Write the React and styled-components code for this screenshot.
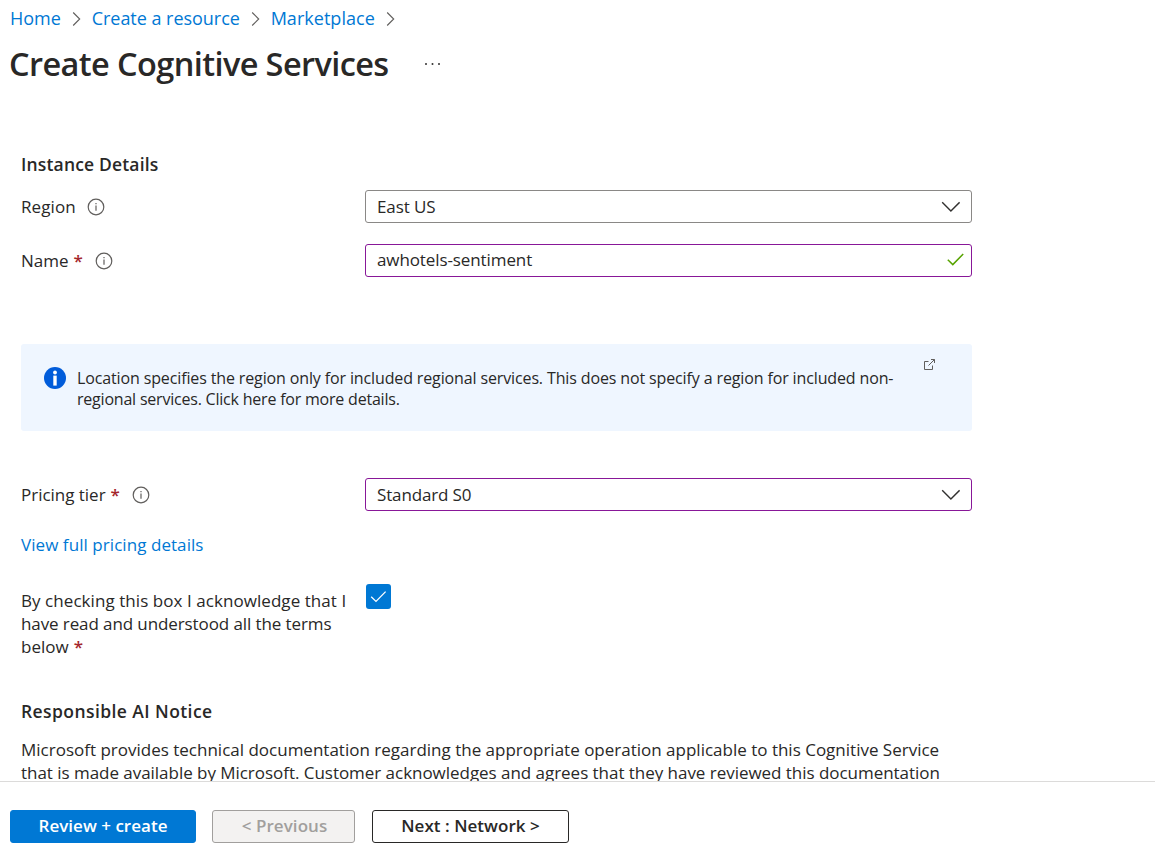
import React from "react";
import styled, { createGlobalStyle } from "styled-components";

const Global = createGlobalStyle`
  * { box-sizing: border-box; }
  body {
    margin: 0;
    background: #fff;
    color: #292827;
    font-family: "Open Sans", "Noto Sans", sans-serif;
    font-size: 17px;
    line-height: 24px;
  }
  p, h1, h2 { margin: 0; }
  svg { display: block; flex: none; }
`;

const Blade = styled.div`
  height: 855px;
  display: flex;
  flex-direction: column;
  overflow: hidden;
`;

const Breadcrumb = styled.nav`
  display: flex;
  align-items: center;
  height: 24px;
  margin-top: 6px;
  padding-left: 10px;
  font-size: 18px;
  white-space: nowrap;
`;

const Crumb = styled.a`
  color: #0078d4;
  text-decoration: none;
  letter-spacing: ${(p) => p.$track || 0}px;
`;

const CrumbArrow = styled.svg`
  margin: 2px 11px 0 10.8px;
`;

const TitleBar = styled.header`
  display: flex;
  align-items: center;
  height: 44px;
  margin-top: 12px;
  padding-left: 9px;
`;

const Title = styled.h1`
  font-size: 32.5px;
  font-weight: 600;
  line-height: 44px;
  letter-spacing: -0.6px;
  white-space: nowrap;
`;

const MoreIcon = styled.svg`
  margin: 0 0 0 35px;
`;

const Form = styled.main`
  flex: 1;
  min-height: 0;
  overflow: hidden;
  padding: 66px 0 0 21px;
`;

const SectionTitle = styled.h2`
  height: 24px;
  margin-top: ${(p) => p.$top || 0}px;
  font-size: 17.5px;
  font-weight: 600;
  line-height: 24px;
  letter-spacing: ${(p) => p.$track || 0}px;
`;

const FieldRow = styled.div`
  display: grid;
  grid-template-columns: 344px 607px;
  align-items: center;
  height: 33px;
  margin-top: ${(p) => p.$top}px;
`;

const Label = styled.label`
  display: flex;
  align-items: center;
  white-space: nowrap;
`;

const Required = styled.span`
  color: #a4262c;
  font-size: 17px;
  font-weight: 600;
  margin-left: 5px;
`;

const InfoIcon = styled.svg`
  margin-left: ${(p) => p.$left}px;
`;

const Control = styled.div`
  display: flex;
  align-items: center;
  justify-content: space-between;
  height: 33px;
  padding: 0 ${(p) => p.$right || 11}px ${(p) => p.$bottom || 0}px 11px;
  border: 1px solid ${(p) => (p.$edited ? "#881798" : "#8a8886")};
  border-radius: 3px;
  letter-spacing: ${(p) => p.$track || 0}px;
`;

const Notice = styled.aside`
  display: flex;
  align-items: flex-start;
  width: 951px;
  height: 87px;
  margin-top: 67px;
  padding: 0 36px 0 23px;
  border-radius: 3px;
  background: #eff6ff;
`;

const NoticeIcon = styled.svg`
  margin-top: 23px;
`;

const NoticeText = styled.p`
  flex: 1;
  margin: 24px 0 0 11px;
  font-size: 16px;
  line-height: 21px;
  white-space: nowrap;
`;

const Line = styled.span`
  display: block;
  white-space: nowrap;
  letter-spacing: ${(p) => p.$track || 0}px;
`;

const ExternalIcon = styled.svg`
  margin-top: 14px;
`;

const PricingLink = styled.a`
  display: block;
  width: max-content;
  margin-top: 22px;
  color: #0078d4;
  text-decoration: none;
  letter-spacing: 0.06px;
`;

const ConsentRow = styled.div`
  display: grid;
  grid-template-columns: 345px auto;
  align-items: start;
  margin-top: 27px;
`;

const ConsentText = styled.div`
  padding-top: 5px;
  line-height: 23px;
`;

const Checkbox = styled.div`
  display: flex;
  align-items: center;
  justify-content: center;
  width: 25px;
  height: 25px;
  border-radius: 3px;
  background: #0078d4;
`;

const Paragraph = styled.p`
  margin-top: 15px;
  line-height: 23px;
`;

const Footer = styled.footer`
  display: flex;
  gap: 16px;
  height: 74px;
  padding: 28px 0 0 10px;
  border-top: 1px solid #dcdbda;
`;

const variants = {
  primary: "background:#0078d4;border-color:#0078d4;color:#fff;",
  disabled: "background:#f3f2f1;border-color:#a19f9d;color:#a19f9d;padding-left:2px;",
  normal: "background:#fff;border-color:#292827;color:#292827;margin-left:1px;",
};

const Button = styled.button`
  width: ${(p) => p.$width}px;
  height: 33px;
  padding: 0 0 2px;
  border: 1px solid;
  border-radius: 3px;
  font: 600 17px/24px "Open Sans", "Noto Sans", sans-serif;
  letter-spacing: ${(p) => p.$track || 0}px;
  white-space: nowrap;
  ${(p) => variants[p.$variant]}
`;

const Arrow = () => (
  <CrumbArrow width="9" height="16" viewBox="0 0 9 16" fill="none" stroke="#605e5c" strokeWidth="1.1">
    <path d="M1.2 1.5 7.7 8 1.2 14.5" />
  </CrumbArrow>
);

const Info = ({ left }) => (
  <InfoIcon $left={left} width="18" height="18" viewBox="0 0 18 18" fill="none" stroke="#605e5c" strokeWidth="1.2">
    <circle cx="9" cy="9" r="7.8" />
    <path d="M9 7.6v5.2M9 5v1.3" />
  </InfoIcon>
);

const Chevron = () => (
  <svg width="19" height="11" viewBox="0 0 19 11" fill="none" stroke="#323130" strokeWidth="1.4">
    <path d="M1.2 1.3 9.9 10 18.6 1.3" />
  </svg>
);

export default function App() {
  return (
    <Blade>
      <Global />
      <Breadcrumb>
        <Crumb>Home</Crumb>
        <Arrow />
        <Crumb $track={-0.03}>Create a resource</Crumb>
        <Arrow />
        <Crumb $track={0.03}>Marketplace</Crumb>
        <Arrow />
      </Breadcrumb>
      <TitleBar>
        <Title>Create Cognitive Services</Title>
        <MoreIcon width="18" height="4" viewBox="0 0 18 4" fill="#323130">
          <circle cx="2" cy="2" r="1" />
          <circle cx="8.5" cy="2" r="1" />
          <circle cx="15" cy="2" r="1" />
        </MoreIcon>
      </TitleBar>
      <Form>
        <SectionTitle $track={0.17}>Instance Details</SectionTitle>
        <FieldRow $top={14}>
          <Label>
            <Line $track={0.1}>Region</Line>
            <Info left={11.5} />
          </Label>
          <Control $track={-0.1}>
            East US
            <Chevron />
          </Control>
        </FieldRow>
        <FieldRow $top={21}>
          <Label>
            <Line>Name</Line>
            <Required>*</Required>
            <Info left={12} />
          </Label>
          <Control $edited $right={7} $bottom={2} $track={-0.1}>
            awhotels-sentiment
            <svg width="17" height="13" viewBox="0 0 17 13" fill="none" stroke="#57a300" strokeWidth="1.5">
              <path d="M.8 6.8 5.8 11.6 16.2 1" />
            </svg>
          </Control>
        </FieldRow>
        <Notice>
          <NoticeIcon width="22" height="22" viewBox="0 0 22 22">
            <circle cx="11" cy="11" r="11" fill="#015cda" />
            <circle cx="11" cy="5.5" r="1.9" fill="#fff" />
            <rect x="9.3" y="8.6" width="3.4" height="10" fill="#fff" />
          </NoticeIcon>
          <NoticeText>
            <Line $track={-0.13}>
              Location specifies the region only for included regional services. This does not specify a region for included non-
            </Line>
            <Line $track={-0.21}>regional services. Click here for more details.</Line>
          </NoticeText>
          <ExternalIcon width="13" height="13" viewBox="0 0 13 13" fill="none" stroke="#605e5c" strokeWidth="1">
            <path d="M5.5 3.5h-4v8h8v-4M8 1.5h3.5V5M11.5 1.5 5.5 7.5" />
          </ExternalIcon>
        </Notice>
        <FieldRow $top={47}>
          <Label>
            <Line $track={-0.02}>Pricing tier</Line>
            <Required>*</Required>
            <Info left={12} />
          </Label>
          <Control $edited $track={-0.14}>
            Standard S0
            <Chevron />
          </Control>
        </FieldRow>
        <PricingLink>View full pricing details</PricingLink>
        <ConsentRow>
          <ConsentText>
            <Line $track={0.06}>By checking this box I acknowledge that I</Line>
            <Line $track={-0.1}>have read and understood all the terms</Line>
            <Line>
              below<Required>*</Required>
            </Line>
          </ConsentText>
          <Checkbox>
            <svg width="17" height="13" viewBox="0 0 17 13" fill="none" stroke="#fff" strokeWidth="1.3">
              <path d="M1.2 6.8 6 11.4 15.6 1.6" />
            </svg>
          </Checkbox>
        </ConsentRow>
        <SectionTitle $top={41} $track={0.42}>Responsible AI Notice</SectionTitle>
        <Paragraph>
          <Line>
            Microsoft provides technical documentation regarding the appropriate operation applicable to this Cognitive Service
          </Line>
          <Line $track={-0.035}>
            that is made available by Microsoft. Customer acknowledges and agrees that they have reviewed this documentation
          </Line>
        </Paragraph>
      </Form>
      <Footer>
        <Button $variant="primary" $width={186} $track={0.02}>Review + create</Button>
        <Button $variant="disabled" $width={143} $track={0.05}>&lt; Previous</Button>
        <Button $variant="normal" $width={197} $track={0.04}>Next : Network &gt;</Button>
      </Footer>
    </Blade>
  );
}
